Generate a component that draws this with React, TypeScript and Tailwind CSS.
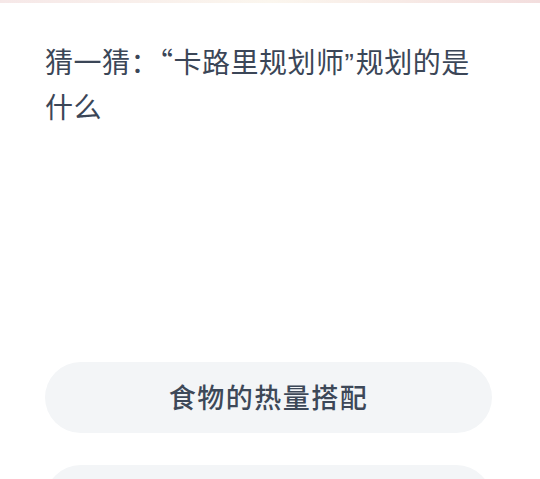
export default function App() {
  const options = ["食物的热量搭配", ""];

  return (
    <div
      className="w-[540px] h-[479px] overflow-hidden bg-white"
      style={{ fontFamily: '"Noto Sans CJK SC", "Noto Sans", sans-serif' }}
    >
      <div className="h-[3px] bg-gradient-to-r from-[#f6e8e8] via-[#fbf6ee] to-[#f3dede]" />
      {/* Question */}
      <div className="h-[359px] px-[45px] pt-[37px]">
        <p className="text-[28px] leading-[43px] tracking-[0.5px] text-[#3b4657] w-[440px]">
          猜一猜：“卡路里规划师<span className="font-['Liberation_Sans',sans-serif] tracking-[2px]">”</span>规划的是什么
        </p>
      </div>

      {/* Options */}
      <div className="flex flex-col gap-[32px] px-[45px]">
        {options.map((opt, i) => (
          <div
            key={i}
            className="h-[71px] w-[447px] rounded-full bg-[#f3f5f7] flex items-center justify-center"
          >
            <span className="text-[27px] font-medium text-[#3d4858] tracking-[1.5px]">{opt}</span>
          </div>
        ))}
      </div>
    </div>
  );
}
